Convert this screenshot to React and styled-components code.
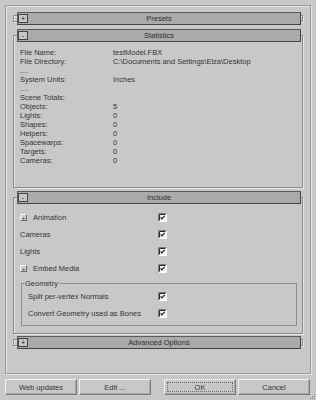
import React from 'react';
import styled, { createGlobalStyle } from 'styled-components';

const stats = [
  ['File Name:', 'testModel.FBX'],
  ['File Directory:', 'C:\\Documents and Settings\\Elza\\Desktop'],
  ['....', ''],
  ['System Units:', 'Inches'],
  ['....', ''],
  ['Scene Totals:', ''],
  ['Objects:', '5'],
  ['Lights:', '0'],
  ['Shapes:', '0'],
  ['Helpers:', '0'],
  ['Spacewarps:', '0'],
  ['Targets:', '0'],
  ['Cameras:', '0'],
];

const includes = [
  { label: 'Animation', expander: true },
  { label: 'Cameras' },
  { label: 'Lights' },
  { label: 'Embed Media', expander: true },
];

const CheckBox = () => (
  <Check width="9" height="9" viewBox="0 0 9 9">
    <rect x="0" y="0" width="9" height="9" fill="#f2f2f2" />
    <path d="M0.5 8.5 V0.5 H8.5" stroke="#7a7a7a" fill="none" />
    <path d="M1.5 7.5 V1.5 H7.5" stroke="#2a2a2a" fill="none" />
    <path d="M1 8.5 H8.5 V1" stroke="#ffffff" fill="none" />
    <path d="M2.6 4.4 L3.9 5.9 L6.7 2.9" stroke="#222" strokeWidth="1.2" fill="none" />
  </Check>
);

const RolloutHeader = ({ title, open }) => (
  <Header>
    <Toggle>{open ? '-' : '+'}</Toggle>
    <HeaderTitle>{title}</HeaderTitle>
  </Header>
);

const App = () => (
  <>
    <GlobalStyle />
    <Window>
      <Frame>
        <Rollout $gap={0}>
          <RolloutHeader title="Presets" />
        </Rollout>

        <Rollout $open $gap={4}>
          <RolloutHeader title="Statistics" open />
          <StatsBody>
            {stats.map(([label, value], i) => (
              <React.Fragment key={i}>
                <span>{label}</span>
                <span>{value}</span>
              </React.Fragment>
            ))}
          </StatsBody>
        </Rollout>

        <Rollout $open $gap={3}>
          <RolloutHeader title="Include" open />
          <IncludeBody>
            {includes.map((item) => (
              <OptionRow key={item.label} $labelWidth={138}>
                <OptionLabel>
                  {item.expander && <Expander>+</Expander>}
                  {item.label}
                </OptionLabel>
                <CheckBox />
              </OptionRow>
            ))}
            <Group>
              <Legend>Geometry</Legend>
              <OptionRow $labelWidth={130}>
                <OptionLabel>Split per-vertex Normals</OptionLabel>
                <CheckBox />
              </OptionRow>
              <OptionRow $labelWidth={130}>
                <OptionLabel>Convert Geometry used as Bones</OptionLabel>
                <CheckBox />
              </OptionRow>
            </Group>
          </IncludeBody>
        </Rollout>

        <Rollout $gap={2}>
          <RolloutHeader title="Advanced Options" />
        </Rollout>
      </Frame>

      <ButtonBar>
        <ButtonGroup>
          <Button>Web updates</Button>
          <Button>Edit ...</Button>
        </ButtonGroup>
        <ButtonGroup>
          <Button>
            <Focus>OK</Focus>
          </Button>
          <Button>Cancel</Button>
        </ButtonGroup>
      </ButtonBar>

      <Grip width="7" height="7" viewBox="0 0 7 7">
        <rect x="5" y="1" width="1" height="1" fill="#808080" />
        <rect x="3" y="3" width="1" height="1" fill="#808080" />
        <rect x="5" y="3" width="1" height="1" fill="#808080" />
        <rect x="1" y="5" width="1" height="1" fill="#808080" />
        <rect x="3" y="5" width="1" height="1" fill="#808080" />
        <rect x="5" y="5" width="1" height="1" fill="#808080" />
      </Grip>
    </Window>
  </>
);

const GlobalStyle = createGlobalStyle`
  html, body {
    margin: 0;
    padding: 0;
    background: #c8c8c8;
  }

  body {
    font-family: "Liberation Sans", Arial, sans-serif;
    font-size: 7.5px;
    color: #353535;
  }
`;

const Window = styled.div`
  position: relative;
  width: 316px;
  height: 400px;
  box-sizing: border-box;
  padding: 5px 0 0 5px;
  background: #c8c8c8;
  overflow: hidden;
`;

const Frame = styled.div`
  box-sizing: border-box;
  width: 306px;
  height: 369px;
  padding: 6px 0 0 7px;
  border: 1px solid #9a9a9a;
  box-shadow: inset 1px 1px 0 #e6e6e6, 1px 1px 0 #e6e6e6;
  display: flex;
  flex-direction: column;
`;

const Rollout = styled.section`
  position: relative;
  width: 290px;
  box-sizing: border-box;
  margin-top: ${(p) => p.$gap}px;

  &::before {
    content: '';
    position: absolute;
    left: 0;
    right: 0;
    top: ${(p) => (p.$open ? 6 : 3)}px;
    bottom: ${(p) => (p.$open ? 0 : 3)}px;
    border: 1px solid #8c8c8c;
    box-shadow: inset 1px 1px 0 #e4e4e4, 1px 1px 0 #e4e4e4;
    pointer-events: none;
  }
`;

const Header = styled.div`
  position: relative;
  z-index: 1;
  box-sizing: border-box;
  height: 13px;
  margin: 0 2px 0 4px;
  background: #aaaaaa;
  border: 1px solid #5a5a5a;
  border-right-color: #444;
  border-bottom-color: #444;
  display: grid;
  grid-template-columns: 11px 1fr 11px;
  align-items: center;
`;

const Toggle = styled.span`
  box-sizing: border-box;
  width: 10px;
  height: 9px;
  background: #c6c6c6;
  border: 1px solid #444;
  display: flex;
  align-items: center;
  justify-content: center;
  font-size: 7px;
  line-height: 1;
  color: #222;
`;

const HeaderTitle = styled.span`
  text-align: center;
  line-height: 11px;
  color: #2e2e2e;
`;

const StatsBody = styled.div`
  padding: 6px 6px 23px 7px;
  display: grid;
  grid-template-columns: 93px 1fr;
  line-height: 9px;
  white-space: nowrap;
`;

const IncludeBody = styled.div`
  padding: 5px 6px 8px 7px;
  display: flex;
  flex-direction: column;
`;

const OptionRow = styled.div`
  height: 17px;
  display: grid;
  grid-template-columns: ${(p) => p.$labelWidth}px 9px;
  align-items: center;
`;

const OptionLabel = styled.span`
  display: flex;
  align-items: center;
  gap: 6px;
  white-space: nowrap;
`;

const Expander = styled.span`
  box-sizing: border-box;
  width: 7px;
  height: 7px;
  background: #cfcfcf;
  border: 1px solid;
  border-color: #f2f2f2 #6a6a6a #6a6a6a #f2f2f2;
  display: flex;
  align-items: center;
  justify-content: center;
  font-size: 6px;
  line-height: 1;
`;

const Check = styled.svg`
  display: block;
`;

const Group = styled.fieldset`
  margin: 2px 0 0 1px;
  padding: 0 6px 3px 6px;
  border: 1px solid #8e8e8e;
  min-width: 0;
`;

const Legend = styled.legend`
  margin-left: -4px;
  padding: 0 1px;
  line-height: 9px;
`;

const ButtonBar = styled.div`
  width: 305px;
  margin-top: 5px;
  display: flex;
  justify-content: space-between;
`;

const ButtonGroup = styled.div`
  display: flex;
  gap: 2px;
`;

const Button = styled.button`
  box-sizing: border-box;
  width: 72px;
  height: 16px;
  padding: 2px;
  background: #c8c8c8;
  border: 1px solid;
  border-color: #f0f0f0 #7c7c7c #7c7c7c #f0f0f0;
  box-shadow: inset -1px -1px 0 #a8a8a8;
  font-family: "Liberation Sans", Arial, sans-serif;
  font-size: 7.5px;
  color: #353535;
  display: flex;
  align-items: center;
  justify-content: center;
`;

const Focus = styled.span`
  flex: 1;
  align-self: stretch;
  display: flex;
  align-items: center;
  justify-content: center;
  border: 1px dotted #6a6a6a;
`;

const Grip = styled.svg`
  position: absolute;
  right: 0;
  bottom: 0;
`;

export default App;
